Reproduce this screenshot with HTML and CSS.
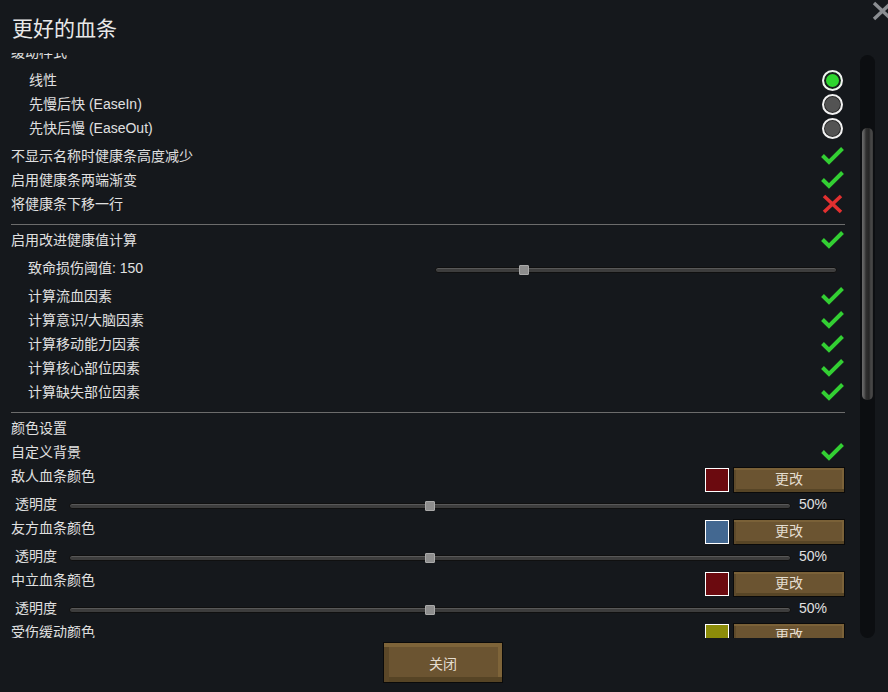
FILE: index.html
```html
<!DOCTYPE html>
<html lang="zh-CN">
<head>
<meta charset="utf-8">
<title>更好的血条</title>
<link rel="stylesheet" href="styles.css">
</head>
<body>
<div class="window">
  <h1 class="title">更好的血条</h1>
  <button class="close-x" aria-label="close">
    <svg width="24" height="22" viewBox="0 0 24 22"><path d="M3 3 L20 19 M20 3 L3 19" stroke="#8b8e92" stroke-width="3.4" fill="none"/></svg>
  </button>
  <div class="main">
    <div class="scroll">
      <div class="content">
        <div class="row">缓动样式</div>
        <div class="radio-group">
          <div class="row indent">线性<span class="radio on"></span></div>
          <div class="row indent">先慢后快 (EaseIn)<span class="radio"></span></div>
          <div class="row indent">先快后慢 (EaseOut)<span class="radio"></span></div>
        </div>
        <div class="row">不显示名称时健康条高度减少<svg class="icon" width="23" height="20" viewBox="0 0 23 20"><path d="M1.5 9.5 L8 16 L21.5 2.5" class="check"/></svg></div>
        <div class="row">启用健康条两端渐变<svg class="icon" width="23" height="20" viewBox="0 0 23 20"><path d="M1.5 9.5 L8 16 L21.5 2.5" class="check"/></svg></div>
        <div class="row">将健康条下移一行<svg class="icon" width="23" height="20" viewBox="0 0 23 20"><path d="M3 2 L20 18 M20 2 L3 18" class="cross"/></svg></div>
        <div class="sep"></div>
        <div class="row">启用改进健康值计算<svg class="icon" width="23" height="20" viewBox="0 0 23 20"><path d="M1.5 9.5 L8 16 L21.5 2.5" class="check"/></svg></div>
        <div class="row sub slider-row">致命损伤阈值: 150<div class="track threshold"><span class="knob" style="left:22%"></span></div></div>
        <div class="sub-group">
          <div class="row sub">计算流血因素<svg class="icon" width="23" height="20" viewBox="0 0 23 20"><path d="M1.5 9.5 L8 16 L21.5 2.5" class="check"/></svg></div>
          <div class="row sub">计算意识/大脑因素<svg class="icon" width="23" height="20" viewBox="0 0 23 20"><path d="M1.5 9.5 L8 16 L21.5 2.5" class="check"/></svg></div>
          <div class="row sub">计算移动能力因素<svg class="icon" width="23" height="20" viewBox="0 0 23 20"><path d="M1.5 9.5 L8 16 L21.5 2.5" class="check"/></svg></div>
          <div class="row sub">计算核心部位因素<svg class="icon" width="23" height="20" viewBox="0 0 23 20"><path d="M1.5 9.5 L8 16 L21.5 2.5" class="check"/></svg></div>
          <div class="row sub">计算缺失部位因素<svg class="icon" width="23" height="20" viewBox="0 0 23 20"><path d="M1.5 9.5 L8 16 L21.5 2.5" class="check"/></svg></div>
        </div>
        <div class="sep"></div>
        <div class="row">颜色设置</div>
        <div class="row">自定义背景<svg class="icon" width="23" height="20" viewBox="0 0 23 20"><path d="M1.5 9.5 L8 16 L21.5 2.5" class="check"/></svg></div>

        <div class="color-row"><span class="label">敌人血条颜色</span><span class="swatch" style="background:#6b0a0f"></span><button class="btn small">更改</button></div>
        <div class="opacity-row"><span class="label">透明度</span><div class="track"><span class="knob" style="left:50%"></span></div><span class="pct">50%</span></div>

        <div class="color-row"><span class="label">友方血条颜色</span><span class="swatch" style="background:#436891"></span><button class="btn small">更改</button></div>
        <div class="opacity-row"><span class="label">透明度</span><div class="track"><span class="knob" style="left:50%"></span></div><span class="pct">50%</span></div>

        <div class="color-row"><span class="label">中立血条颜色</span><span class="swatch" style="background:#6b0a0f"></span><button class="btn small">更改</button></div>
        <div class="opacity-row"><span class="label">透明度</span><div class="track"><span class="knob" style="left:50%"></span></div><span class="pct">50%</span></div>

        <div class="color-row"><span class="label">受伤缓动颜色</span><span class="swatch" style="background:#8c8c0a"></span><button class="btn small">更改</button></div>
      </div>
    </div>
    <div class="scrollbar"><div class="thumb"></div></div>
  </div>
  <div class="footer">
    <button class="btn big">关闭</button>
  </div>
</div>
</body>
</html>
```
FILE: styles.css
```css
* { box-sizing: border-box; }
html, body { margin: 0; padding: 0; }
body {
  width: 888px;
  height: 692px;
  overflow: hidden;
  background: #15181c;
  color: #e0e0e0;
  font-family: "Liberation Sans", "Noto Sans CJK SC", sans-serif;
  font-size: 14px;
}
.window {
  position: relative;
  width: 888px;
  height: 692px;
  display: flex;
  flex-direction: column;
}
.title {
  margin: 0;
  height: 53px;
  padding: 15px 0 0 12px;
  font-size: 21px;
  line-height: 28px;
  font-weight: normal;
  color: #e8e8e8;
}
.close-x {
  position: absolute;
  top: 0;
  right: -7px;
  padding: 0;
  border: 0;
  background: none;
  line-height: 0;
}
.main {
  height: 585px;
  display: flex;
  padding-left: 11px;
}
.scroll {
  width: 834px;
  overflow: hidden;
}
.content {
  margin-top: -13px;
}
.row {
  height: 24px;
  display: flex;
  align-items: center;
  justify-content: space-between;
  line-height: 24px;
  white-space: nowrap;
}
.indent { padding-left: 18px; }
.sub { padding-left: 17px; }
.radio-group { padding: 4px 0; }
.sub-group { margin-top: 4px; }
.slider-row { margin-top: 4px; }
.radio {
  width: 21px;
  height: 21px;
  margin-right: 2px;
  border-radius: 50%;
  border: 2px solid #f2f2f2;
  background: #535353;
  box-shadow: inset 0 0 0 1px #2a2a2a;
}
.radio.on {
  background: #2ed52e;
  box-shadow: inset 0 0 0 2px #1a1c1f;
}
.icon { margin-right: 1px; flex: none; }
.check {
  fill: none;
  stroke: #33cf33;
  stroke-width: 4;
}
.cross {
  fill: none;
  stroke: #e23030;
  stroke-width: 3.6;
}
.sep {
  height: 12px;
  padding-top: 8px;
}
.sep::before {
  content: "";
  display: block;
  height: 1px;
  background: #6c6c6c;
}
.track {
  position: relative;
  height: 6px;
  border-radius: 3px;
  background: #3d3d3d;
  border: 1px solid #101010;
  box-shadow: inset 0 1px 0 #585858;
}
.threshold {
  width: 402px;
  margin-right: 8px;
  margin-top: 4px;
}
.knob {
  position: absolute;
  top: 50%;
  width: 10px;
  height: 10px;
  margin: -5px 0 0 -5px;
  background: #8d8d8d;
  border: 1px solid #a9a9a9;
  border-radius: 1px;
}
.color-row {
  height: 26px;
  display: flex;
  align-items: flex-start;
}
.color-row .label {
  flex: 1;
  line-height: 24px;
}
.swatch {
  width: 24px;
  height: 24px;
  margin-top: 4px;
  border: 1px solid #ffffff;
}
.btn {
  font-family: "Liberation Sans", "Noto Sans CJK SC", sans-serif;
  color: #e4ddd0;
  background: #6b5431;
  border: 1px solid #0a0a0a;
  padding: 0;
  cursor: pointer;
}
.btn.small {
  width: 112px;
  height: 26px;
  margin: 3px 0 0 4px;
  font-size: 14px;
  line-height: 22px;
  padding-bottom: 2px;
  box-shadow: inset 0 2px 0 #7a6138, inset 2px 0 0 #5e4a2b, inset 0 -3px 0 #574526, inset -2px 0 0 #7b6239;
}
.opacity-row {
  height: 26px;
  display: grid;
  grid-template-columns: 58px 722px auto;
  align-items: center;
  padding-top: 2px;
}
.opacity-row .label { padding-left: 4px; line-height: 24px; }
.opacity-row .track { margin-top: 4px; }
.pct { padding-left: 8px; line-height: 24px; }
.scrollbar {
  width: 15px;
  height: 583px;
  margin: 2px 0 0 15px;
  padding-top: 73px;
  border-radius: 8px;
  background: #0c0e11;
}
.thumb {
  width: 11px;
  height: 272px;
  margin-left: 2px;
  border-radius: 5px;
  background: linear-gradient(to right, #6a6a6a 0, #5a5a5a 2px, #303030 4px, #262626 7px, #4a4a4a 9px, #3a3a3a 11px);
}
.footer {
  flex: 1;
  display: flex;
  justify-content: center;
  padding-top: 4px;
  padding-right: 2px;
}
.btn.big {
  width: 120px;
  height: 41px;
  font-size: 14px;
  box-shadow: inset 0 4px 0 #7e6439, inset 5px 0 0 #5b4728, inset 0 -5px 0 #564425, inset -4px 0 0 #7e6439;
}
```
